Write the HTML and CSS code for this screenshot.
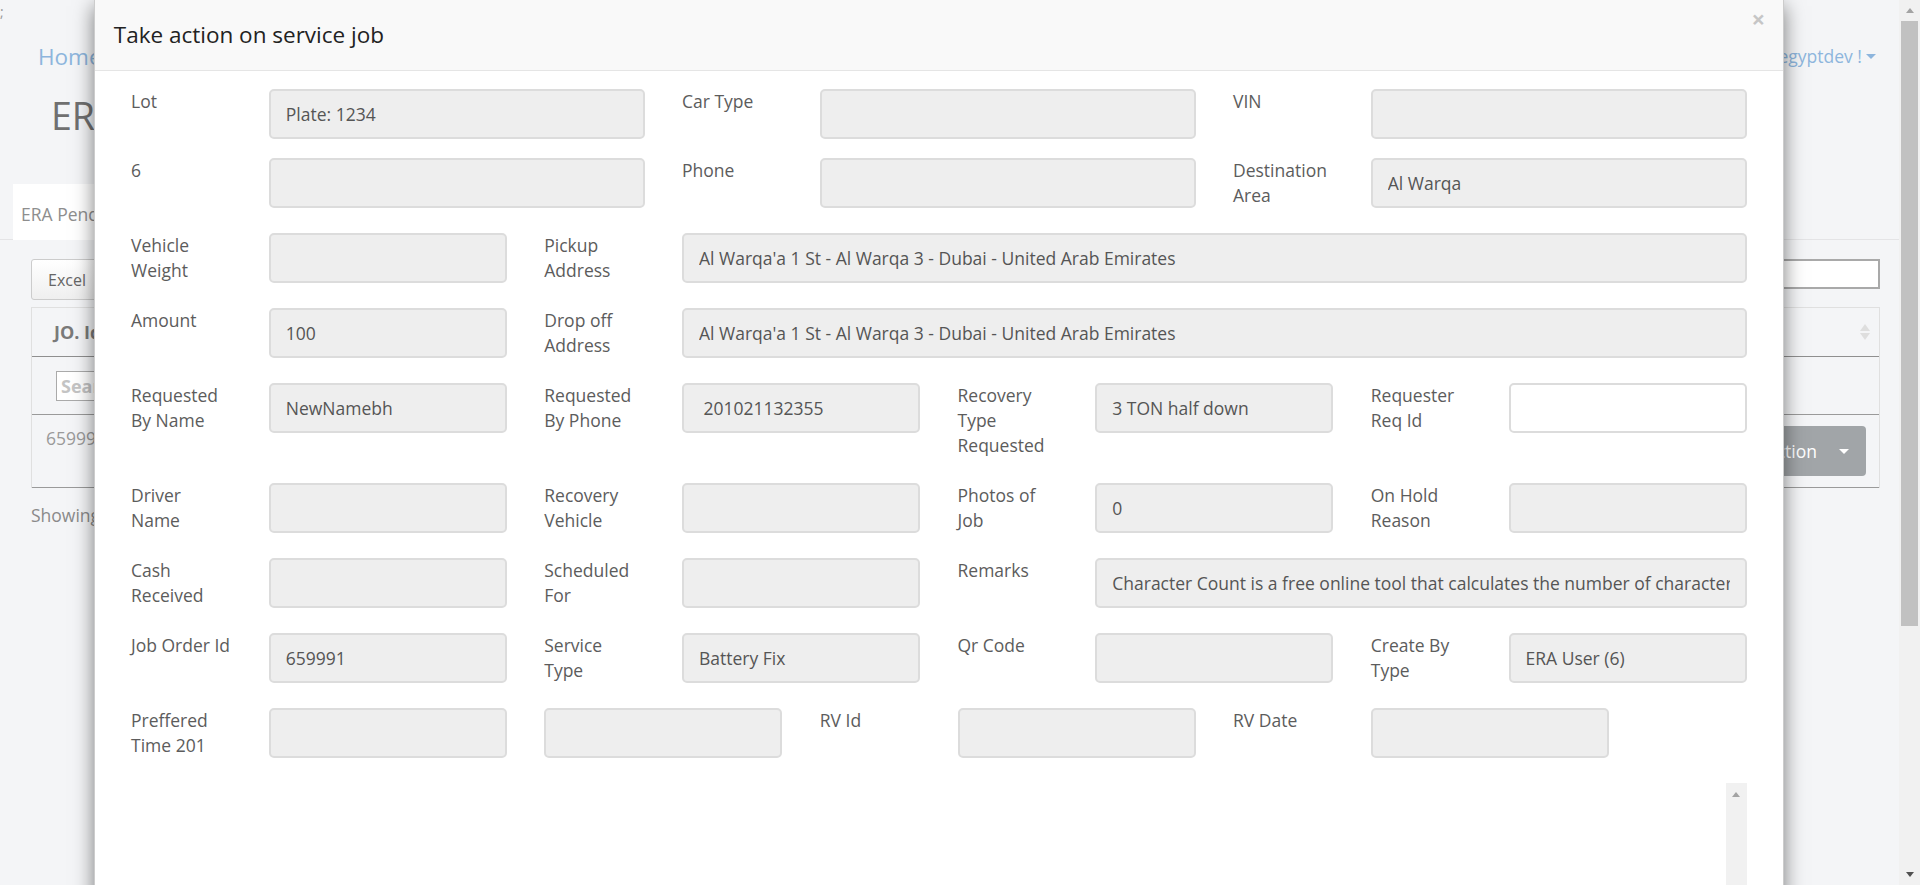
FILE: index.html
```html
<!DOCTYPE html>
<html lang="en">
<head>
<meta charset="utf-8">
<title>ERA Pending Jobs</title>
<link rel="stylesheet" href="styles.css">
</head>
<body>
<div class="page">
  <div class="main">
    <div class="stray">;</div>
    <div class="navbar">
      <a class="home">Home</a>
      <span class="user">Welcome egyptdev ! <span class="caret-blue"></span></span>
    </div>
    <h1 class="heading">ERA</h1>
    <div class="tabs"><div class="tab active">ERA Pending</div></div>
    <div class="tab-content">
      <div class="toolbar">
        <button class="btn-excel">Excel</button>
        <input class="dt-search" type="text">
      </div>
      <div class="table">
        <div class="thead">
          <span class="th">JO. Id</span>
          <span class="sort"><i class="s-up"></i><i class="s-down"></i></span>
        </div>
        <div class="tfilter"><input class="col-search" placeholder="Search"></div>
        <div class="trow">
          <span class="td">659991</span>
          <button class="btn-action">Action <span class="caret-white"></span></button>
        </div>
      </div>
      <div class="showing">Showing</div>
    </div>
  </div>
  <div class="vscroll">
    <div class="sb-btn"><i class="arr-up light"></i></div>
    <div class="sb-thumb"></div>
    <div class="sb-rest"></div>
    <div class="sb-btn bottom"><i class="arr-down dark"></i></div>
  </div>
</div>

<div class="modal">
  <div class="modal-header">
    <h4 class="modal-title">Take action on service job</h4>
    <button class="close">&times;</button>
  </div>
  <div class="modal-body">
    <form class="grid">
      <label>Lot</label><input class="fc s3" readonly value="Plate: 1234">
      <label>Car Type</label><input class="fc s3" readonly value="">
      <label>VIN</label><input class="fc s3" readonly value="">

      <label>6</label><input class="fc s3" readonly value="">
      <label>Phone</label><input class="fc s3" readonly value="">
      <label>Destination<br>Area</label><input class="fc s3" readonly value="Al Warqa">

      <label>Vehicle<br>Weight</label><input class="fc s2" readonly value="">
      <label>Pickup<br>Address</label><input class="fc s8" readonly value="Al Warqa'a 1 St - Al Warqa 3 - Dubai - United Arab Emirates">

      <label>Amount</label><input class="fc s2" readonly value="100">
      <label>Drop off<br>Address</label><input class="fc s8" readonly value="Al Warqa'a 1 St - Al Warqa 3 - Dubai - United Arab Emirates">

      <label>Requested<br>By Name</label><input class="fc s2" readonly value="NewNamebh">
      <label>Requested<br>By Phone</label><input class="fc s2" readonly value=" 201021132355">
      <label>Recovery<br>Type<br>Requested</label><input class="fc s2" readonly value="3 TON half down">
      <label>Requester<br>Req Id</label><input class="fc s2 editable" value="">

      <label>Driver<br>Name</label><input class="fc s2" readonly value="">
      <label>Recovery<br>Vehicle</label><input class="fc s2" readonly value="">
      <label>Photos of<br>Job</label><input class="fc s2" readonly value="0">
      <label>On Hold<br>Reason</label><input class="fc s2" readonly value="">

      <label>Cash<br>Received</label><input class="fc s2" readonly value="">
      <label>Scheduled<br>For</label><input class="fc s2" readonly value="">
      <label>Remarks</label><input class="fc s5" readonly value="Character Count is a free online tool that calculates the number of characters, words, sentences and paragraphs in your text.">

      <label>Job Order Id</label><input class="fc s2" readonly value="659991">
      <label>Service<br>Type</label><input class="fc s2" readonly value="Battery Fix">
      <label>Qr Code</label><input class="fc s2" readonly value="">
      <label>Create By<br>Type</label><input class="fc s2 sel" readonly value="ERA User (6)">

      <label>Preffered<br>Time 201</label><input class="fc s2" readonly value="">
      <input class="fc s2" readonly value="">
      <label>RV Id</label><input class="fc s2" readonly value="">
      <label>RV Date</label><input class="fc s2" readonly value="">

      <div class="scrollbox">
        <div class="sb-track"><i class="arr-up light"></i></div>
      </div>
    </form>
  </div>
</div>
</body>
</html>
```
FILE: styles.css
```css
* { box-sizing: border-box; }
html, body { margin: 0; height: 885px; overflow: hidden; }
body { font-family: "Open Sans", "Liberation Sans", sans-serif; color: #333; }

/* ---------- background page ---------- */
.page { display: flex; height: 885px; background: #f4f5f7; }
.main { flex: 1; min-width: 0; }
.stray { height: 24px; font-size: 14px; line-height: 24px; color: #9a9a9a; padding-left: 0; }
.navbar { height: 64px; display: flex; align-items: center; justify-content: space-between; padding: 0 23px 0 38px; }
.home { font-size: 22.5px; color: #8db5dd; }
.user { font-size: 17.5px; color: #8db5dd; display: flex; align-items: center; gap: 4px; }
.caret-blue { width: 0; height: 0; border-left: 5px solid transparent; border-right: 5px solid transparent; border-top: 5px solid #8db5dd; }
.heading { margin: 0; height: 56px; line-height: 56px; font-size: 37.5px; font-weight: 400; color: #707070; padding-left: 51px; }
.tabs { margin-top: 40px; padding-left: 13px; border-bottom: 1px solid #e4e4e6; height: 56px; }
.tab { display: inline-block; height: 56px; line-height: 52px; padding: 4px 8px 0; background: #fff; font-size: 17.5px; color: #8e8e8e; }
.tab-content { padding: 0 19px 0 31px; }
.toolbar { margin-top: 19px; display: flex; justify-content: space-between; align-items: flex-start; }
.btn-excel { height: 41px; padding: 0 16px; font: 16px "Open Sans", sans-serif; color: #666; background: linear-gradient(#fff, #efefef); border: 1px solid #ccc; border-radius: 3px; }
.dt-search { width: 240px; height: 30px; border: 2px solid #a9a9a9; background: #fff; }
.table { margin-top: 7px; border-left: 1px solid #e0e0e0; border-right: 1px solid #e0e0e0; }
.thead { height: 50px; border-top: 1px solid #e0e0e0; border-bottom: 1px solid #8f8f8f; display: flex; align-items: center; justify-content: space-between; padding: 0 9px 0 22px; }
.th { font-size: 18px; font-weight: 700; color: #7a7a7a; }
.sort { display: flex; flex-direction: column; gap: 2px; }
.s-up { width: 0; height: 0; border-left: 5px solid transparent; border-right: 5px solid transparent; border-bottom: 7px solid #dedede; }
.s-down { width: 0; height: 0; border-left: 5px solid transparent; border-right: 5px solid transparent; border-top: 7px solid #dedede; }
.tfilter { height: 58px; border-bottom: 1px solid #9a9a9a; padding: 14px 0 0 24px; }
.col-search { width: 70px; height: 30px; border: 1px solid #aaa; font: 700 18px "Open Sans", sans-serif; padding: 0 4px; }
.col-search::placeholder { color: #c4c4c4; }
.trow { height: 73px; border-bottom: 1px solid #9a9a9a; display: flex; justify-content: space-between; align-items: flex-start; padding: 11px 13px 0 14px; }
.td { font-size: 17.5px; color: #9a9a9a; line-height: 25px; margin-top: 0; }
.btn-action { height: 50px; padding: 0 17px 0 26px; background: #a1a5a8; color: #fff; border: 0; border-radius: 4px; font: 17.5px "Open Sans", sans-serif; display: flex; align-items: center; gap: 22px; }
.caret-white { width: 0; height: 0; border-left: 5px solid transparent; border-right: 5px solid transparent; border-top: 5px solid #fff; }
.showing { margin-top: 15px; font-size: 17.5px; line-height: 25px; color: #8a8a8a; }

/* page scrollbar */
.vscroll { width: 21px; background: #f1f1f1; display: flex; flex-direction: column; }
.sb-btn { height: 21px; display: flex; align-items: center; justify-content: center; }
.sb-thumb { height: 605px; margin: 0 2px; background: #c1c1c1; }
.sb-rest { flex: 1; }
.arr-up { width: 0; height: 0; border-left: 4px solid transparent; border-right: 4px solid transparent; border-bottom: 5px solid #a3a3a3; }
.arr-down { width: 0; height: 0; border-left: 4px solid transparent; border-right: 4px solid transparent; border-top: 5px solid #505050; }

/* ---------- modal ---------- */
.modal { position: absolute; left: 94px; top: 0; width: 1690px; height: 1000px; background: #fff; border: 1px solid rgba(0,0,0,.2); border-top: 0; box-shadow: 0 6px 19px rgba(0,0,0,.5); }
.modal-header { background: #f9f9f9; border-bottom: 1px solid #e5e5e5; padding: 18.75px; display: flex; justify-content: space-between; align-items: flex-start; }
.modal-title { margin: 0; font-size: 22.5px; line-height: 32px; font-weight: 400; color: #222; }
.close { margin: -12px -1px 0 0; padding: 0; background: none; border: 0; font: 700 24px/1 "Open Sans", sans-serif; color: #000; opacity: .2; }
.modal-body { padding: 18.75px 36.5px 0 36px; }
.grid { display: grid; grid-template-columns: repeat(12, 1fr); column-gap: 37.5px; row-gap: 19px; align-items: start; }
.grid label { font-size: 17.5px; line-height: 25px; color: #5c5c5c; margin-bottom: 6px; white-space: nowrap; font-weight: 400; }
.fc { height: 50px; width: 100%; border: 2px solid #dcdcdc; border-radius: 5px; background: #eee; padding: 0 15px; font: 17.5px "Open Sans", sans-serif; color: #555; outline: none; }
.fc.editable { background: #fff; }
.s2 { grid-column: span 2; }
.s3 { grid-column: span 3; }
.s5 { grid-column: span 5; }
.s8 { grid-column: span 8; }
.scrollbox { grid-column: 1 / -1; height: 160px; display: flex; justify-content: flex-end; }
.sb-track { width: 21px; background: #f1f1f1; display: flex; justify-content: center; padding-top: 9px; }
```
